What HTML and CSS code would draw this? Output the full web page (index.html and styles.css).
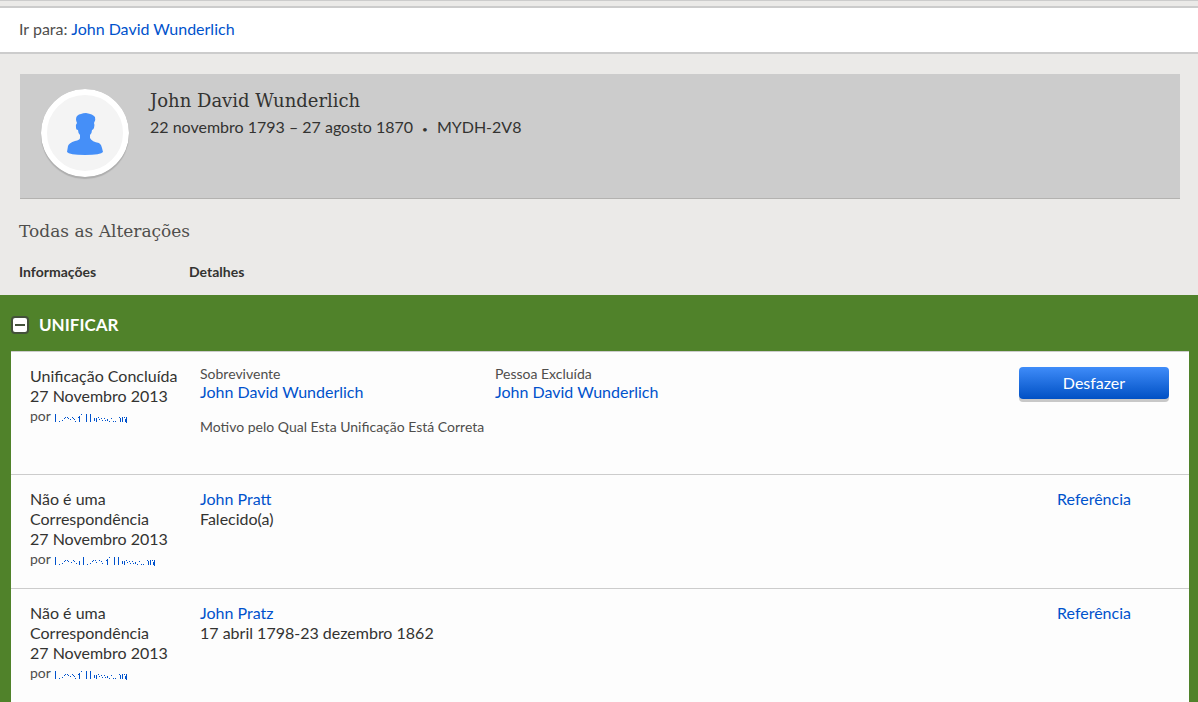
FILE: index.html
```
<!DOCTYPE html>
<html lang="pt">
<head>
<meta charset="utf-8">
<meta name="viewport" content="width=device-width, initial-scale=1">
<title>Todas as Alterações</title>
<link rel="stylesheet" href="styles.css">
</head>
<body>
<svg class="defs" aria-hidden="true">
  <symbol id="name-short" viewBox="0 -1 76 12">
    <path d="M1.5 1v8M5.5 8v1M8.5 7v1M10.5 5v1M11.5 4v1M13.5 4v1M14.5 5v1M16.5 6v1M18.5 4v1M19.5 5v1M20.5 6v1M21.5 8v1M24.5 4v1M25.5 3v6M27.5 1v1M32.5 1v8M36.5 1v8M40.5 5v3M42.5 5v4M44.5 4v1M45.5 6v1M47.5 5v1M48.5 7v1M50.5 5v1M51.5 7v1M53.5 6v2M55.5 8v1M57.5 5v1M59.5 8v1M61.5 8v1M65.5 4v1M66.5 5v4M68.5 4v5M70.5 4v1M71.5 6v3M72.5 4v6"/>
  </symbol>
  <symbol id="name-long" viewBox="0 -1 104 12">
    <path d="M1.5 1v8M5.5 8v1M8.5 7v1M10.5 5v1M11.5 4v1M13.5 4v1M14.5 5v1M17.5 6v1M19.5 4v1M20.5 5v1M22.5 7v1M25.5 5v4M29.5 1v8M33.5 8v1M36.5 7v1M38.5 5v1M39.5 4v1M41.5 4v1M42.5 6v1M45.5 4v1M47.5 5v1M48.5 7v1M52.5 4v1M53.5 3v6M55.5 1v1M60.5 1v8M64.5 1v8M68.5 5v3M70.5 5v4M72.5 4v1M73.5 6v1M75.5 5v1M76.5 7v1M78.5 5v1M79.5 7v1M81.5 6v2M83.5 8v1M85.5 5v1M87.5 8v1M89.5 8v1M93.5 4v1M94.5 5v4M96.5 4v5M98.5 4v1M99.5 6v3M100.5 4v6"/>
  </symbol>
</svg>
<nav class="jump">Ir para: <a href="#profile">John David Wunderlich</a></nav>
<main>
  <header class="profile" id="profile">
    <svg class="avatar" viewBox="0 0 88 88" aria-hidden="true">
      <circle class="avatar-ring" cx="44" cy="44" r="41"/>
      <path class="avatar-person" d="M36 27 Q38 25 40 25 Q42 24 45 24 Q52 25 54 28 Q55 31 53 34 Q54 36 53 39 Q52 41 51 41 Q51 44 49 46 L49 49 Q51 53 58 54 Q61 56 61 59 L62 63 Q60 66 44 66 Q28 66 26 63 L27 57 Q28 54 34 52 Q39 51 39 49 L39 46 Q37 44 37 41 Q35 41 35 39 Q34 36 36 34 Q34 30 36 27Z"/>
    </svg>
    <div class="person">
      <h1>John David Wunderlich</h1>
      <p>22 novembro 1793 – 27 agosto 1870<span class="dot">•</span>MYDH-2V8</p>
    </div>
  </header>
  <h2>Todas as Alterações</h2>
  <div class="heads"><span>Informações</span><span>Detalhes</span></div>
  <section class="group">
    <h3>
      <button class="toggle" type="button" aria-label="Recolher"><svg viewBox="0 0 18 18"><rect x="1" y="1" width="16" height="16" rx="3"/><path d="M4 9h10"/></svg></button>
      UNIFICAR
    </h3>
    <div class="changes">
      <article class="change merge">
        <div class="info">
          <p>Unificação Concluída<br>27 Novembro 2013</p>
          <p class="by">por <a href="#contributor" aria-label="Colaborador"><svg class="name-short"><use href="#name-short"/></svg></a></p>
        </div>
        <div class="details">
          <dl class="pair">
            <div><dt>Sobrevivente</dt><dd><a href="#survivor">John David Wunderlich</a></dd></div>
            <div><dt>Pessoa Excluída</dt><dd><a href="#deleted">John David Wunderlich</a></dd></div>
          </dl>
          <p class="reason">Motivo pelo Qual Esta Unificação Está Correta</p>
        </div>
        <div class="action"><button class="undo" type="button">Desfazer</button></div>
      </article>
      <article class="change">
        <div class="info">
          <p>Não é uma Correspondência<br>27 Novembro 2013</p>
          <p class="by">por <a href="#contributor" aria-label="Colaborador"><svg class="name-long"><use href="#name-long"/></svg></a></p>
        </div>
        <div class="details"><p><a href="#pratt">John Pratt</a><br>Falecido(a)</p></div>
        <div class="action"><a href="#reference-pratt">Referência</a></div>
      </article>
      <article class="change">
        <div class="info">
          <p>Não é uma Correspondência<br>27 Novembro 2013</p>
          <p class="by">por <a href="#contributor" aria-label="Colaborador"><svg class="name-short"><use href="#name-short"/></svg></a></p>
        </div>
        <div class="details"><p><a href="#pratz">John Pratz</a><br>17 abril 1798-23 dezembro 1862</p></div>
        <div class="action"><a href="#reference-pratz">Referência</a></div>
      </article>
    </div>
  </section>
</main>
</body>
</html>
```
FILE: styles.css
```
* { box-sizing: border-box; }
body {
  margin: 0;
  background: #ebeae8;
  color: #333331;
  font: 16px/20px Lato, "Open Sans", sans-serif;
  border-top: 1px solid #cccccc;
  padding-top: 5px;
}
h1, h2, h3, p, dl, dd { margin: 0; }
a { color: #0052cc; text-decoration: none; }
.defs { position: absolute; width: 0; height: 0; }
.jump {
  background: #ffffff;
  border-top: 2px solid #cccccc;
  border-bottom: 2px solid #cccccc;
  padding: 11px 19px 13px;
  color: #4f4e4c;
}
.profile {
  display: flex;
  gap: 21px;
  margin: 20px 18px 0 20px;
  padding: 15px 21px 21px;
  background: #cccccc;
  border-bottom: 1px solid #b3b2b0;
}
.avatar {
  flex: none;
  width: 88px;
  height: 88px;
  border-radius: 50%;
  box-shadow: 0 2px 1px rgba(0, 0, 0, 0.15);
}
.avatar-ring { fill: #f4f4f4; stroke: #ffffff; stroke-width: 6; }
.avatar-person { fill: #458ff8; }
h1, h2 { font: 18px/24px "DejaVu Serif", serif; }
.person p { margin-top: 4px; }
.dot { font-size: 10px; margin: 0 9px; }
h2 { margin: 20px 20px 0 19px; color: #4f4e4c; font-size: 17px; }
.heads {
  display: grid;
  grid-template-columns: 170px 1fr;
  padding: 19px 19px 13px;
  font-size: 14px;
  font-weight: 700;
}
.group { background: #50822a; padding: 0 9px 0 11px; }
h3 {
  display: flex;
  align-items: center;
  gap: 10px;
  padding: 20px 0 16px;
  color: #ffffff;
  font-size: 17px;
  line-height: 20px;
}
.toggle { width: 18px; height: 18px; padding: 0; border: 0; background: none; }
.toggle svg { display: block; fill: #ffffff; stroke: #44523a; stroke-width: 2; }
.changes { background: #fdfdfd; }
.change {
  display: grid;
  grid-template-columns: 150px 1fr 150px;
  column-gap: 20px;
  padding: 14px 20px 19px 19px;
  border-top: 1px solid #cccccc;
}
.merge { min-height: 123px; }
.by { font-size: 14px; color: #4f4e4c; }
.by svg { height: 12px; vertical-align: -3px; fill: none; stroke: #0052cc; stroke-width: 1; shape-rendering: crispEdges; }
.name-short { width: 76px; }
.name-long { width: 104px; }
.pair { display: grid; grid-template-columns: 275px 275px; column-gap: 20px; }
.pair dt { font-size: 14px; line-height: 16px; color: #4f4e4c; }
.reason { margin-top: 15px; font-size: 14px; color: #4f4e4c; }
.action { text-align: center; }
.undo {
  width: 100%;
  height: 32px;
  margin-top: 1px;
  padding: 0;
  border: 0;
  border-radius: 4px;
  background: linear-gradient(#3f8cf9, #0050c4);
  box-shadow: 0 3px 0 #c8c8c8;
  color: #ffffff;
  font: inherit;
}
```
